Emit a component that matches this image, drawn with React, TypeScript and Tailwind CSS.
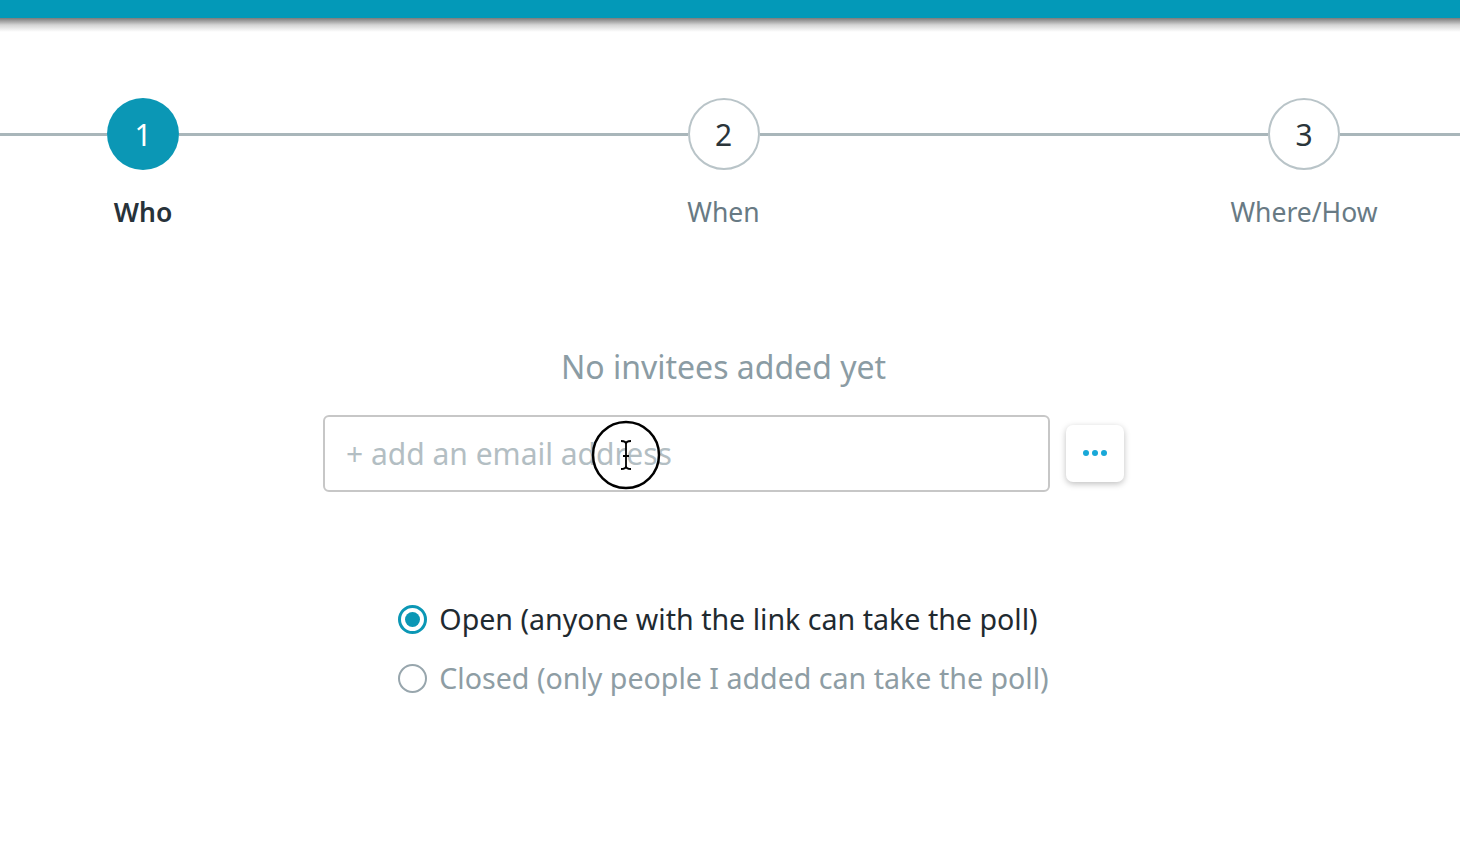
import { useState } from "react";

const steps = [
  { n: 1, label: "Who" },
  { n: 2, label: "When" },
  { n: 3, label: "Where/How" },
];

function Step({ n, label, active }: { n: number; label: string; active: boolean }) {
  return (
    <div className="flex flex-col items-center w-[72px] shrink-0">
      <div
        className={
          active
            ? "w-[72px] h-[72px] rounded-full bg-[#0b97b5] text-white flex items-center justify-center text-[30px]"
            : "w-[72px] h-[72px] rounded-full bg-white border-2 border-[#b9c4c8] text-[#2b353a] flex items-center justify-center text-[30px]"
        }
      >
        {n}
      </div>
      <div
        className={
          active
            ? "mt-[23px] whitespace-nowrap text-[26.5px] font-semibold text-[#27323a]"
            : "mt-[23px] whitespace-nowrap text-[26.5px] text-[#687a84]"
        }
      >
        {label}
      </div>
    </div>
  );
}

function Radio({ checked, label, onClick }: { checked: boolean; label: string; onClick: () => void }) {
  return (
    <button onClick={onClick} className="flex items-center gap-[12px] h-[40px] cursor-pointer">
      {checked ? (
        <span className="w-[29px] h-[29px] rounded-full border-[3px] border-[#0b97b5] flex items-center justify-center">
          <span className="w-[15px] h-[15px] rounded-full bg-[#0b97b5]" />
        </span>
      ) : (
        <span className="w-[29px] h-[29px] rounded-full border-2 border-[#98a6ad]" />
      )}
      <span className={checked ? "text-[28.6px] text-[#1f2a30]" : "text-[28.6px] text-[#8e9da4]"}>{label}</span>
    </button>
  );
}

export default function App() {
  const [mode, setMode] = useState<"open" | "closed">("open");

  return (
    <div className="relative w-[1460px] h-[848px] bg-white overflow-hidden" style={{ fontFamily: '"Noto Sans", "Open Sans", sans-serif' }}>
      <div className="h-[18px] bg-[#0399b8]" />
      <div className="h-[14px] bg-gradient-to-b from-[#7a7a7a] via-[#d4d4d4] to-white" />

      {/* stepper */}
      <div className="flex items-start mt-[66px]">
        <div className="w-[107px] h-[3px] bg-[#a9b6ba] mt-[35px]" />
        <Step {...steps[0]} active />
        <div className="flex-1 h-[3px] bg-[#a9b6ba] mt-[35px]" />
        <Step {...steps[1]} active={false} />
        <div className="flex-1 h-[3px] bg-[#a9b6ba] mt-[35px]" />
        <Step {...steps[2]} active={false} />
        <div className="w-[120px] h-[3px] bg-[#a9b6ba] mt-[35px]" />
      </div>

      <div className="flex flex-col items-center mt-[116px] mr-[13px]">
        <div className="text-[32px] text-[#8b9ca4] leading-[36px]">No invitees added yet</div>

        <div className="flex items-center gap-[16px] mt-[30px]">
          <div className="w-[727px] h-[77px] rounded-[6px] border-2 border-[#c7c7c7] flex items-center px-[21px]">
            <input
              className="w-full outline-none text-[30px] text-[#333] placeholder:text-[#b3bec3] bg-transparent"
              placeholder="+ add an email address"
            />
          </div>
          <button className="w-[58px] h-[57px] rounded-[7px] bg-white shadow-[0_2px_6px_rgba(0,0,0,0.25)] flex items-center justify-center gap-[3px]">
            <span className="w-[6px] h-[6px] rounded-full bg-[#18a8d8]" />
            <span className="w-[6px] h-[6px] rounded-full bg-[#18a8d8]" />
            <span className="w-[6px] h-[6px] rounded-full bg-[#18a8d8]" />
          </button>
        </div>

        <div className="flex flex-col items-start gap-[19px] mt-[108px]">
          <Radio checked={mode === "open"} label="Open (anyone with the link can take the poll)" onClick={() => setMode("open")} />
          <Radio checked={mode === "closed"} label="Closed (only people I added can take the poll)" onClick={() => setMode("closed")} />
        </div>
      </div>

      {/* cursor highlight overlay */}
      <svg className="absolute left-[591px] top-[420px] pointer-events-none" width="70" height="70" viewBox="0 0 70 70">
        <circle cx="35" cy="35" r="33" fill="none" stroke="#000" strokeWidth="2.5" />
        <path d="M30 21 Q35 21 35 24 Q35 21 40 21 M35 24 V46 M30 49 Q35 49 35 46 Q35 49 40 49 M32 36 H38" fill="none" stroke="#000" strokeWidth="1.8" />
      </svg>
    </div>
  );
}
